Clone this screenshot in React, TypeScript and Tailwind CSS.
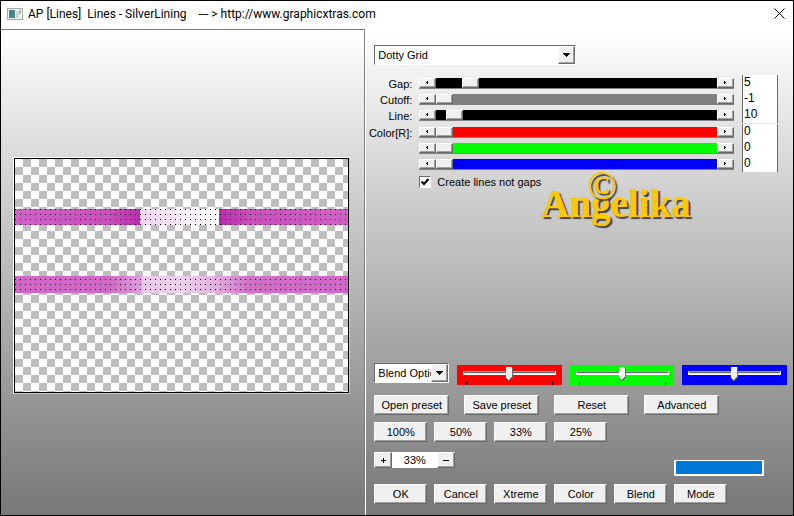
import { useState, type ReactNode } from "react";

type Track = {
  label: string;
  name: string;
  value: number;
  offset: string;
  color: string;
};

const patternTracks: Track[] = [
  { label: "Gap:", name: "Gap", value: 5, offset: "w-[26px]", color: "bg-black" },
  { label: "Cutoff:", name: "Cutoff", value: -1, offset: "w-0", color: "bg-[#808080]" },
  { label: "Line:", name: "Line", value: 10, offset: "w-[10px]", color: "bg-black" },
];

const colorTracks: Track[] = [
  { label: "Color[R]:", name: "Red", value: 0, offset: "w-0", color: "bg-[#ff0000]" },
  { label: "", name: "Green", value: 0, offset: "w-0", color: "bg-[#00ff00]" },
  { label: "", name: "Blue", value: 0, offset: "w-0", color: "bg-[#0000ff]" },
];

const zoomLevels = ["100%", "50%", "33%", "25%"];
const presetActions = ["Open preset", "Save preset", "Reset", "Advanced"];
const dialogActions = ["OK", "Cancel", "Xtreme", "Color", "Blend", "Mode"];

// raised 3D edge shared by buttons and thumbs
const bevel =
  "border border-t-white border-l-white border-r-[#696969] border-b-[#696969] bg-[#f0f0f0] shadow-[inset_-1px_-1px_0_#a0a0a0]";
const sunken = "border border-t-[#696969] border-l-[#696969] border-r-white border-b-white bg-white";

// grey cells of the transparency checkerboard, 8px each
let cells = "";
for (let row = 0; row < 30; row++) {
  for (let col = (row + 1) % 2; col < 42; col += 2) {
    const w = Math.min(8, 333 - col * 8);
    const h = Math.min(8, 233 - row * 8);
    cells += `M${1 + col * 8} ${1 + row * 8}h${w}v${h}h-${w}z`;
  }
}

function dots(rows: number[]) {
  let d = "";
  for (const y of rows) {
    for (let x = 1; x < 334; x += 5) d += `M${x} ${y}h1v1h-1z`;
  }
  return d;
}

function Button({ children, className = "w-[53px]" }: { children: ReactNode; className?: string }) {
  return (
    <button type="button" className={`h-5 text-center leading-4 whitespace-nowrap ${bevel} ${className}`}>
      {children}
    </button>
  );
}

function ArrowButton({ dir, label }: { dir: "left" | "right"; label: string }) {
  return (
    <button
      type="button"
      aria-label={label}
      className={`flex h-full w-[17px] shrink-0 items-center justify-center ${bevel}`}
    >
      <svg width="3" height="3" shapeRendering="crispEdges" aria-hidden>
        {dir === "left" ? <path d="M0 1h1v-1h1v3h-1v-1h-1z" /> : <path d="M2 1h-1v-1h-1v3h1v-1h1z" />}
      </svg>
    </button>
  );
}

function Dropdown({ label, option, className }: { label: string; option: string; className: string }) {
  return (
    <div className={`relative h-5 shrink-0 ${sunken} ${className}`}>
      <select
        aria-label={label}
        className="block h-full w-full appearance-none overflow-hidden bg-white pr-4 pl-[3px] outline-none"
      >
        <option>{option}</option>
      </select>
      <span className={`pointer-events-none absolute inset-y-0 right-0 flex w-[17px] items-center justify-center ${bevel}`}>
        <svg width="7" height="4" shapeRendering="crispEdges" aria-hidden>
          <path d="M0 0h7v1h-7zM1 1h5v1h-5zM2 2h3v1h-3zM3 3h1v1h-1z" />
        </svg>
      </span>
    </div>
  );
}

function TrackRow({ track }: { track: Track }) {
  const id = `track-${track.name}`;
  return (
    <div className="flex h-4 items-center">
      <label htmlFor={id} className="flex w-[38px] shrink-0 justify-end pt-[2px] leading-3 whitespace-nowrap">
        {track.label}
      </label>
      <div className="ml-[7px] flex h-[11px] flex-1 border-b border-[#808080]">
        <ArrowButton dir="left" label={`${track.name} down`} />
        <div className={`flex flex-1 ${track.color}`}>
          <div className={`shrink-0 ${track.offset}`} />
          <div className={`h-full w-[17px] shrink-0 ${bevel}`} />
        </div>
        <ArrowButton dir="right" label={`${track.name} up`} />
      </div>
      <input
        id={id}
        aria-label={track.name}
        defaultValue={track.value}
        className="ml-2 h-4 w-9 shrink-0 border-x border-[#696969] bg-white px-px pb-[2px] text-[12px] leading-3 outline-none"
      />
    </div>
  );
}

function Fader({ label, className }: { label: string; className: string }) {
  return (
    <div className={`relative mt-[2px] h-5 flex-1 ${className}`}>
      <input type="range" aria-label={label} className="absolute inset-0 h-full w-full opacity-0" />
      <svg viewBox="0 0 105 20" className="block h-full w-full" shapeRendering="crispEdges" aria-hidden>
        <path d="M6 6h93v4h-93z" fill="#fff" />
        <path d="M6 6h92v1h-92z" fill="#a0a0a0" />
        <path d="M7 7h91v1h-91z" fill="#696969" />
        <path d="M7 8h91v1h-91z" fill="#e3e3e3" />
        <path d="M9 17h1v3h-1zM95 17h1v3h-1z" fill="#000" />
        <path d="M49 2h7v11l-3 3h-1l-3-3z" fill="#696969" />
        <path d="M49 2h6v10l-3 3-3-3z" fill="#fff" />
        <path d="M50 3h4v9l-2 2-2-2z" fill="#f0f0f0" />
      </svg>
    </div>
  );
}

function Preview() {
  return (
    <svg width="335" height="235" className="block" shapeRendering="crispEdges" role="img" aria-label="Preview">
      <defs>
        <linearGradient id="bandLeft">
          <stop offset="0" stopColor="#d060c6" />
          <stop offset="0.75" stopColor="#c850bc" />
          <stop offset="1" stopColor="#b92cac" />
        </linearGradient>
        <linearGradient id="bandMid">
          <stop offset="0" stopColor="#efd4ee" />
          <stop offset="1" stopColor="#fff" />
        </linearGradient>
        <linearGradient id="bandRight">
          <stop offset="0" stopColor="#b92cac" />
          <stop offset="0.25" stopColor="#c850bc" />
          <stop offset="1" stopColor="#d060c6" />
        </linearGradient>
        <linearGradient id="bandSoft">
          <stop offset="0" stopColor="#d166c7" />
          <stop offset="0.28" stopColor="#d068c6" />
          <stop offset="0.375" stopColor="#dc9ad8" />
          <stop offset="0.385" stopColor="#ecc8ea" />
          <stop offset="0.5" stopColor="#efd0ee" />
          <stop offset="0.6" stopColor="#e4b0e0" />
          <stop offset="0.7" stopColor="#d070c8" />
          <stop offset="1" stopColor="#d166c7" />
        </linearGradient>
      </defs>
      <rect width="335" height="235" />
      <rect x="1" y="1" width="333" height="233" fill="#fff" />
      <path d={cells} fill="#bebebe" />
      <rect x="1" y="51" width="125" height="16" fill="url(#bandLeft)" />
      <rect x="126" y="51" width="79" height="16" fill="url(#bandMid)" />
      <rect x="205" y="51" width="129" height="16" fill="url(#bandRight)" />
      <path d={dots([51, 56, 61, 66])} />
      <rect x="1" y="118" width="333" height="17" fill="url(#bandSoft)" />
      <path d={dots([121, 126, 131])} />
    </svg>
  );
}

function Watermark() {
  return (
    <div className="pointer-events-none absolute top-0 left-[167px] font-['Liberation_Serif',serif] text-[39px] leading-10 font-bold text-[#ffc800] [text-shadow:2px_2px_1px_#404048]">
      <span className="absolute -top-[6px] left-[46px]">©</span>
      <span className="block pt-3">Angelika</span>
    </div>
  );
}

export default function App() {
  const [lines, setLines] = useState(true);

  return (
    <div className="flex min-h-screen flex-col border border-black bg-white font-['Liberation_Sans',sans-serif] text-[11px] text-black">
      <header className="flex h-7 shrink-0 items-center px-[6px] pb-[3px] font-['Roboto',sans-serif] text-[12px]">
        <svg width="16" height="12" viewBox="0 0 16 12" shapeRendering="crispEdges" aria-hidden>
          <path d="M0 0h16v12h-16z" fill="#a8a8a8" />
          <path d="M1 1h14v10h-14z" fill="#f4f4f4" />
          <path d="M2 2h6v8h-6z" fill="#468a86" />
          <path d="M2 2h3v4h-3z" fill="#4a78a0" />
          <path d="M9 3h3v7h-3z" fill="#d4d4d4" />
          <path d="M12 2h2v4h-2z" fill="#9cc5a5" />
        </svg>
        <h1 className="ml-[5px] flex-1 whitespace-pre">
          {"AP [Lines]  Lines - SilverLining    --- > http://www.graphicxtras.com"}
        </h1>
        <button type="button" aria-label="Close" className="px-[2px]">
          <svg width="11" height="11" viewBox="0 0 11 11" stroke="#000" aria-hidden>
            <path d="M0.5 0.5l10 10M10.5 0.5l-10 10" />
          </svg>
        </button>
      </header>

      <main className="flex flex-1 bg-linear-to-b from-white to-[#787878]">
        <section className="flex w-[46%] shrink-0 items-center border-t border-r border-[#808080] pt-[6px] pl-3 shadow-[1px_0_0_#fff]">
          <div className="border border-t-white border-r-[#c8c8c8] border-b-[#c8c8c8] border-l-white">
            <Preview />
          </div>
        </section>

        <section className="flex flex-1 flex-col pt-4 pr-[6px] pb-[11px] pl-[9px]">
          <Dropdown label="Effect" option="Dotty Grid" className="w-[202px]" />

          <div className="mt-[10px] mr-[9px] flex flex-col gap-px">
            {[patternTracks, colorTracks].map((group, i) => (
              <div key={i} className="flex flex-col">
                {group.map((t) => (
                  <TrackRow key={t.name} track={t} />
                ))}
              </div>
            ))}
          </div>

          <div className="relative flex items-start pl-[45px]">
            <label className="mt-[2px] flex items-center gap-[6px]">
              <span className="relative block size-3">
                <input
                  type="checkbox"
                  checked={lines}
                  onChange={(e) => setLines(e.target.checked)}
                  className={`block size-3 appearance-none ${sunken}`}
                />
                {lines && (
                  <svg
                    viewBox="0 0 12 12"
                    className="pointer-events-none absolute inset-0"
                    fill="none"
                    stroke="#000"
                    strokeWidth="2"
                    aria-hidden
                  >
                    <path d="M2.5 5.5l2.5 2.5 4.5-5" />
                  </svg>
                )}
              </span>
              Create lines not gaps
            </label>
            <Watermark />
          </div>

          <div className="mt-auto flex items-start gap-2">
            <Dropdown label="Blend options" option="Blend Options" className="w-[75px]" />
            <Fader label="Red" className="bg-[#ff0000]" />
            <Fader label="Green" className="bg-[#00ff00]" />
            <Fader label="Blue" className="bg-[#0000ff]" />
          </div>

          <div className="mt-[10px] flex gap-[15px]">
            {presetActions.map((name) => (
              <Button key={name} className="w-[75px]">
                {name}
              </Button>
            ))}
          </div>

          <div className="mt-[7px] flex gap-[7px]">
            {zoomLevels.map((level) => (
              <Button key={level}>{level}</Button>
            ))}
          </div>

          <div className="mt-[10px] flex h-6 items-start">
            <button type="button" aria-label="Zoom in" className={`flex h-4 w-[18px] items-center justify-center ${bevel}`}>
              <svg width="5" height="5" shapeRendering="crispEdges" aria-hidden>
                <path d="M0 2h5v1h-5zM2 0h1v5h-1z" />
              </svg>
            </button>
            <output className="h-4 w-[45px] bg-white text-center leading-4">33%</output>
            <button type="button" aria-label="Zoom out" className={`flex h-4 w-[18px] items-center justify-center ${bevel}`}>
              <svg width="6" height="1" shapeRendering="crispEdges" aria-hidden>
                <path d="M0 0h6v1h-6z" />
              </svg>
            </button>
            <button
              type="button"
              aria-label="Line color"
              className="mr-[23px] ml-auto h-4 w-[90px] self-end border-2 border-t border-white bg-[#0078d7]"
            />
          </div>

          <div className="mt-2 flex gap-[7px]">
            {dialogActions.map((name) => (
              <Button key={name}>{name}</Button>
            ))}
          </div>
        </section>
      </main>
    </div>
  );
}
